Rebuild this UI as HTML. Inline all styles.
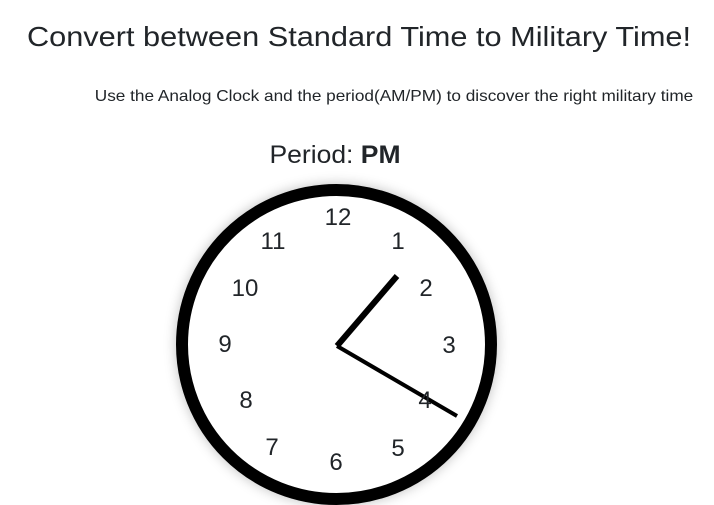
<!DOCTYPE html>
<html><head><style>
body{margin:0;width:714px;height:500px;overflow:hidden;background:#fff;font-family:"Liberation Sans",sans-serif;color:#212529;position:relative}
.t{position:absolute;white-space:nowrap;transform-origin:0 0}
.n{position:absolute;font-size:24px;transform:translate(-50%,-50%);color:#212529}
</style></head><body>
<div class="t" style="top:21px;left:358.5px;font-size:28px;transform:translateX(-50%) scaleX(1.097);transform-origin:center;">Convert between Standard Time to Military Time!</div>
<div class="t" style="top:88px;left:393.5px;font-size:16px;transform:translateX(-50%) scaleX(1.075);transform-origin:center;">Use the Analog Clock and the period(AM/PM) to discover the right military time</div>
<div class="t" style="top:141px;left:335px;font-size:25px;transform:translateX(-50%) scaleX(1.06);transform-origin:center;">Period: <b>PM</b></div>
<div style="position:absolute;left:176px;top:184px;width:297px;height:297px;border:12px solid #000;border-radius:50%;box-shadow:0 0 12px rgba(0,0,0,0.25)"></div>
<svg style="position:absolute;left:0;top:0" width="714" height="500">
<line x1="337" y1="346" x2="397" y2="276" stroke="#000" stroke-width="6"/>
<line x1="337" y1="346" x2="457" y2="416" stroke="#000" stroke-width="4"/>
</svg>
<div class="n" style="left:338px;top:218px">12</div>
<div class="n" style="left:398px;top:242px">1</div>
<div class="n" style="left:426px;top:289px">2</div>
<div class="n" style="left:449px;top:346px">3</div>
<div class="n" style="left:425px;top:401px">4</div>
<div class="n" style="left:398px;top:449px">5</div>
<div class="n" style="left:336px;top:463px">6</div>
<div class="n" style="left:272px;top:448px">7</div>
<div class="n" style="left:246px;top:401px">8</div>
<div class="n" style="left:225px;top:345px">9</div>
<div class="n" style="left:245px;top:289px">10</div>
<div class="n" style="left:273px;top:242px">11</div>
</body></html>
